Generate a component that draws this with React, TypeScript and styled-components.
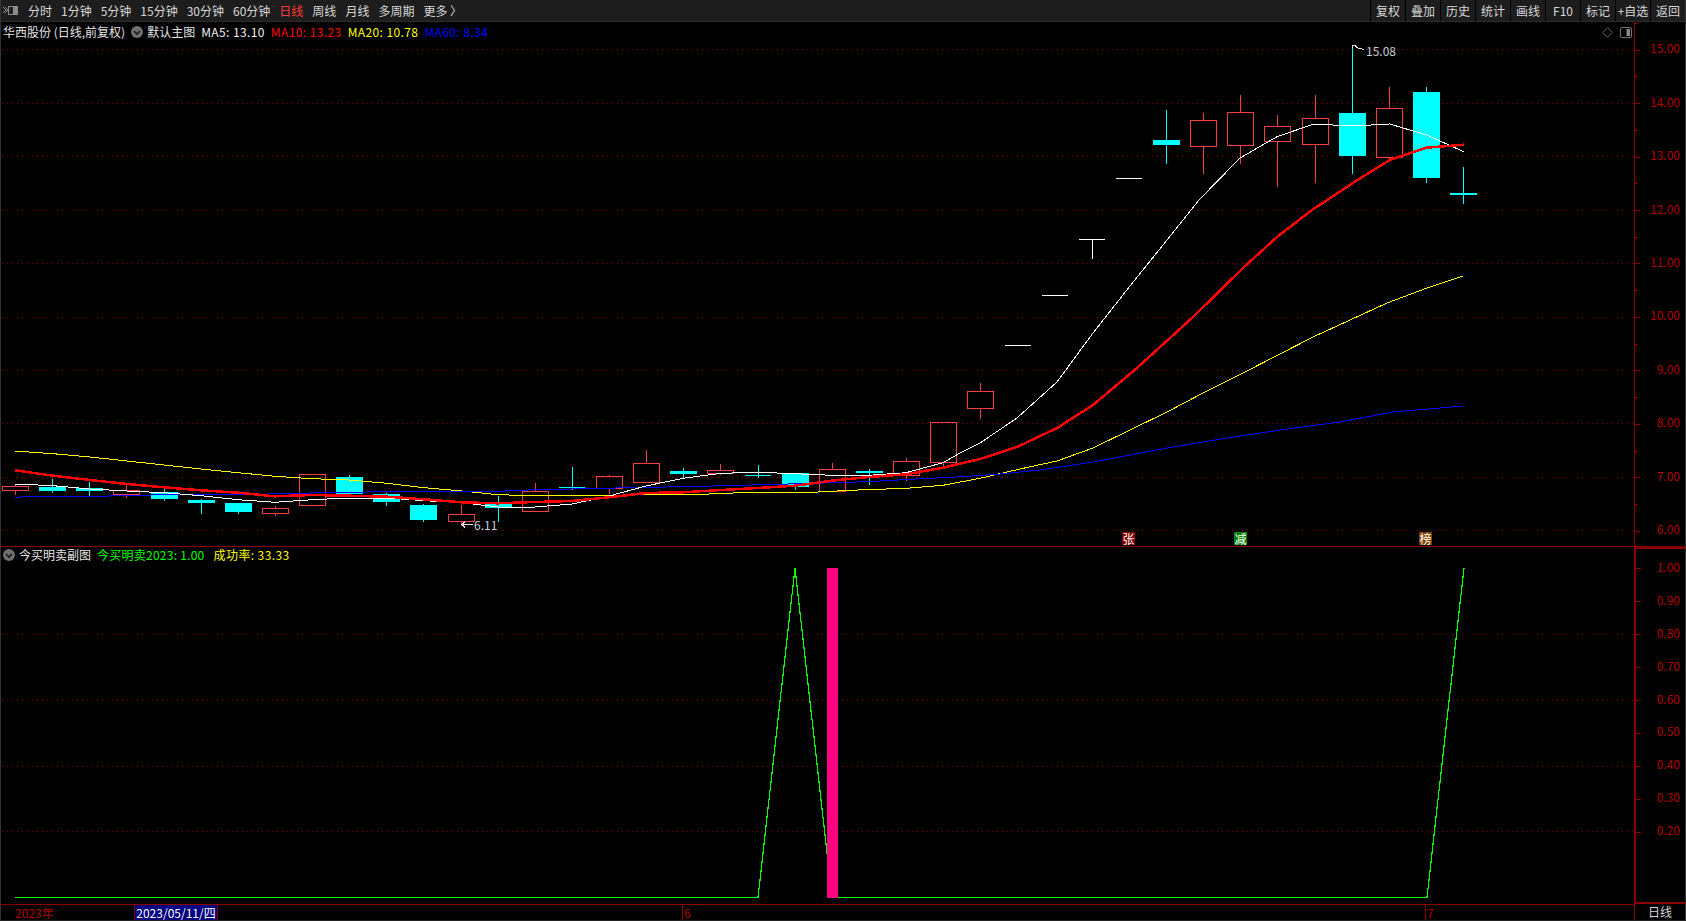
import React from 'react';
import styled, { createGlobalStyle } from 'styled-components';

const DARK_RED = '#8a0000';
const AXIS_TEXT = '#b00000';
const FONT = '"Noto Sans CJK SC", "Noto Sans", sans-serif';

const Global = createGlobalStyle`
  html, body { margin: 0; padding: 0; background: #000; }
  #root { width: 1686px; height: 921px; }
`;

const Page = styled.div`
  box-sizing: border-box;
  width: 1686px;
  height: 921px;
  display: flex;
  flex-direction: column;
  background: #000;
  border-left: 1px solid #333;
  border-right: 1px solid #333;
  border-bottom: 1px solid #222;
  overflow: hidden;
  font-family: ${FONT};
  font-size: 12px;
  line-height: 1;
`;

const Toolbar = styled.header`
  box-sizing: border-box;
  height: 22px;
  display: flex;
  align-items: stretch;
  background: #1d1d1d;
  border-bottom: 1px solid #2c2c2c;
  flex: none;
`;

const MenuIcon = styled.svg`
  width: 16px;
  height: 12px;
  margin: 5px 0 0 1px;
  flex: none;
`;

const PeriodList = styled.nav`
  display: flex;
  align-items: center;
  gap: 9px;
  margin-left: 10px;
`;

const PeriodItem = styled.span<{ $active?: boolean }>`
  color: ${(p) => (p.$active ? '#ff3a3a' : '#d8d8d8')};
  white-space: nowrap;
`;

const ActionList = styled.div`
  margin-left: auto;
  display: flex;
  align-items: stretch;
`;

const ActionButton = styled.span`
  box-sizing: border-box;
  width: 35px;
  display: flex;
  align-items: center;
  justify-content: center;
  border-left: 1px solid #000;
  color: #d8d8d8;
  white-space: nowrap;
`;

const Pane = styled.section<{ $height: number; $divider?: boolean }>`
  box-sizing: border-box;
  height: ${(p) => p.$height}px;
  display: flex;
  flex: none;
  border-bottom: ${(p) => (p.$divider ? `1px solid ${DARK_RED}` : 'none')};
`;

const ChartArea = styled.div`
  position: relative;
  flex: 1;
  min-width: 0;
  overflow: hidden;
`;

const ChartSvg = styled.svg`
  display: block;
  width: 100%;
  height: 100%;
`;

const Legend = styled.div<{ $height: number }>`
  position: absolute;
  top: 0;
  left: 2px;
  height: ${(p) => p.$height}px;
  display: flex;
  align-items: center;
  gap: 6px;
  white-space: nowrap;
`;

const LegendText = styled.span<{ $color: string; $spacing?: number }>`
  color: ${(p) => p.$color};
  letter-spacing: ${(p) => p.$spacing ?? 0}px;
`;

const LegendIcon = styled.svg`
  width: 12px;
  height: 12px;
  flex: none;
  margin-right: -2px;
`;

const CornerIcons = styled.div`
  position: absolute;
  top: 5px;
  right: 2px;
  display: flex;
  align-items: center;
  gap: 7px;
`;

const PriceNote = styled.span<{ $x: number; $y: number }>`
  position: absolute;
  left: ${(p) => p.$x}px;
  top: ${(p) => p.$y}px;
  color: #c8d0d8;
  line-height: 14px;
`;

const Badge = styled.span<{ $x: number; $bg: string }>`
  position: absolute;
  left: ${(p) => p.$x}px;
  top: 510px;
  width: 13px;
  height: 13px;
  display: flex;
  align-items: center;
  justify-content: center;
  background: ${(p) => p.$bg};
  color: #fff;
  font-size: 12px;
`;

const Axis = styled.aside<{ $thick?: boolean; $top: number; $row: number }>`
  box-sizing: border-box;
  width: 51px;
  flex: none;
  overflow: hidden;
  display: grid;
  grid-auto-rows: ${(p) => p.$row}px;
  align-content: start;
  padding-top: ${(p) => p.$top}px;
  border-left: ${(p) => (p.$thick ? 2 : 1)}px solid ${DARK_RED};
  ${(p) => (p.$thick ? `border-top: 2px solid ${DARK_RED}; border-bottom: 2px solid ${DARK_RED};` : '')}
`;

const AxisLabel = styled.div<{ $minor?: boolean }>`
  position: relative;
  display: flex;
  align-items: center;
  justify-content: flex-end;
  padding: 0 5px 3px 0;
  color: ${AXIS_TEXT};

  &::before {
    content: '';
    position: absolute;
    left: 0;
    top: 50%;
    width: 5px;
    height: 1px;
    background: ${DARK_RED};
  }

  ${(p) =>
    p.$minor
      ? `&::after {
    content: '';
    position: absolute;
    left: 0;
    top: 0;
    width: 3px;
    height: 1px;
    background: ${DARK_RED};
  }`
      : ''}
`;

const TimeAxis = styled.footer`
  box-sizing: border-box;
  flex: 1;
  display: flex;
  min-height: 0;
`;

const TimeTrack = styled.div`
  position: relative;
  flex: 1;
  border-top: 1px solid ${DARK_RED};
`;

const TimeMark = styled.span<{ $x: number }>`
  position: absolute;
  top: 0;
  bottom: 0;
  left: ${(p) => p.$x}px;
  display: flex;
  align-items: center;
  padding-left: 1px;
  color: ${AXIS_TEXT};
  border-left: 1px solid ${DARK_RED};
`;

const YearMark = styled.span`
  position: absolute;
  top: 0;
  bottom: 0;
  left: 14px;
  display: flex;
  align-items: center;
  color: ${AXIS_TEXT};
`;

const DateCursor = styled.span`
  position: absolute;
  top: 0;
  bottom: 0;
  left: 133px;
  width: 84px;
  display: flex;
  align-items: center;
  justify-content: center;
  background: #000080;
  color: #fff;
  white-space: nowrap;
  border-left: 1px solid ${DARK_RED};
  border-right: 1px solid ${DARK_RED};
  box-sizing: border-box;
`;

const PeriodCell = styled.div`
  box-sizing: border-box;
  width: 51px;
  flex: none;
  display: flex;
  align-items: center;
  justify-content: center;
  color: #d8d8d8;
  border-left: 1px solid ${DARK_RED};
`;

type C = [number, number, number, number, 'r' | 'c' | 'w'];
// [wick top, body top, body bottom, wick bottom, kind], all in page pixels
const candles: C[] = [
  [484, 486, 490, 494, 'r'],
  [479, 487, 491, 492, 'c'],
  [482, 488, 491, 495, 'c'],
  [485, 490, 494, 497, 'r'],
  [489, 492, 499, 500, 'c'],
  [499, 500, 503, 513, 'c'],
  [503, 503, 512, 513, 'c'],
  [506, 508, 513, 515, 'r'],
  [474, 474, 505, 505, 'r'],
  [475, 477, 494, 495, 'c'],
  [493, 494, 502, 505, 'c'],
  [504, 505, 520, 521, 'c'],
  [505, 514, 521, 525, 'r'],
  [496, 504, 508, 521, 'c'],
  [483, 491, 511, 511, 'r'],
  [467, 487, 488, 489, 'c'],
  [475, 476, 488, 493, 'r'],
  [450, 463, 482, 482, 'r'],
  [468, 471, 474, 477, 'c'],
  [464, 470, 473, 474, 'r'],
  [465, 475, 476, 477, 'c'],
  [473, 473, 487, 489, 'c'],
  [463, 469, 491, 491, 'r'],
  [469, 471, 473, 484, 'c'],
  [458, 461, 475, 480, 'r'],
  [422, 422, 462, 467, 'r'],
  [383, 391, 408, 418, 'r'],
  [345, 345, 345, 345, 'w'],
  [295, 295, 295, 295, 'w'],
  [239, 239, 239, 258, 'w'],
  [178, 178, 178, 178, 'w'],
  [110, 140, 145, 163, 'c'],
  [113, 120, 146, 173, 'r'],
  [95, 112, 145, 163, 'r'],
  [115, 126, 141, 186, 'r'],
  [95, 118, 144, 182, 'r'],
  [45, 113, 156, 173, 'c'],
  [87, 108, 157, 160, 'r'],
  [87, 92, 178, 182, 'c'],
  [167, 193, 195, 203, 'c'],
];

type Pt = [number, number];
const ma5: Pt[] = [
  [15, 484], [53, 485.7], [90, 489], [127, 491], [164, 492.7], [201, 495.7], [238, 499.7], [275, 502.3],
  [312, 499.7], [349, 498], [387, 498], [424, 500.7], [462, 502.7], [498, 507], [535, 507], [572, 504],
  [609, 496], [646, 486], [683, 478.3], [721, 473.3], [758, 472.3], [795, 473.7], [832, 475.3], [869, 475.3],
  [906, 472.7], [943, 462.7], [960, 453], [980, 443], [1017, 418], [1057, 382], [1093, 333], [1130, 286],
  [1167, 240], [1199, 200], [1221.7, 176.7], [1240, 158], [1277, 136.7], [1314, 124], [1352.7, 126],
  [1389.7, 124], [1426.7, 135], [1463.7, 151.7],
];
const ma10: Pt[] = [
  [15, 470.3], [53, 475.7], [90, 480], [127, 484], [164, 487.3], [201, 490.3], [238, 492.7], [275, 496.3],
  [312, 495], [349, 495.7], [387, 496.7], [424, 499.3], [462, 502.3], [498, 503.3], [535, 502], [572, 501],
  [609, 497.3], [646, 493], [683, 492.3], [721, 490], [758, 488], [795, 485.7], [832, 480.7], [869, 477],
  [906, 474.3], [943, 467.7], [980, 459], [1017, 447], [1057, 428], [1093, 405], [1137, 368], [1193, 317],
  [1243, 268], [1277, 237], [1312, 210], [1352.7, 183], [1389.7, 160], [1426.7, 147.7], [1463.7, 144.7],
];
const ma20: Pt[] = [
  [15, 451], [53, 453.7], [90, 457], [127, 461], [164, 465], [201, 469], [238, 472.7], [275, 476.3],
  [312, 478.7], [349, 480], [387, 483.3], [424, 487.7], [462, 491], [498, 494.7], [535, 495.7], [572, 495.7],
  [609, 496], [646, 494.3], [702, 494.3], [740, 492.7], [813, 492.3], [850, 490.3], [906, 488.3], [943, 485.3],
  [980, 478.3], [1020, 469], [1057, 461], [1093, 448], [1130, 430], [1167, 412], [1203, 393], [1243, 373],
  [1280, 354], [1313, 337], [1387, 303], [1427, 288], [1463, 276],
];
const ma60: Pt[] = [
  [15, 497.3], [34, 496.3], [109, 496], [164, 494.7], [257, 494.3], [293, 493.3], [367, 492], [433, 491.7],
  [500, 491.3], [517, 490.3], [553, 489.3], [590, 488.7], [628, 487.7], [702, 486.3], [740, 485.3], [777, 484.3],
  [813, 483.3], [850, 482.3], [887, 480.7], [915, 479], [963, 476.7], [1000, 474], [1040, 470], [1093, 462],
  [1167, 448], [1227, 438], [1287, 429], [1340, 422], [1393, 412], [1463, 406],
];
const signal: Pt[] = [[15, 897.5], [758, 897.5], [795, 568], [832, 897.5], [1427, 897.5], [1464, 568]];

const pts = (p: Pt[]) => p.map(([x, y]) => `${x},${y}`).join(' ');
const candleX = (i: number) => Math.round(15 + 37.13 * i);
const priceY = (p: number) => Math.round(49.3 + (15 - p) * 53.45) + 0.5;

const COLORS = { r: '#f44040', c: '#00ffff', w: '#ffffff' };

function Candle({ i, c }: { i: number; c: C }) {
  const x = candleX(i);
  const [hi, top, bot, lo, kind] = c;
  const col = COLORS[kind];
  const wick = <line x1={x + 0.5} x2={x + 0.5} y1={hi} y2={lo + 1} stroke={col} />;
  if (kind === 'c' && bot - top >= 2) {
    return (
      <g>
        {wick}
        <rect x={x - 13} y={top} width={27} height={bot - top} fill={col} />
      </g>
    );
  }
  if (bot - top < 2) {
    return (
      <g>
        {wick}
        <line x1={x - 13} x2={x + 13} y1={top + 0.5} y2={top + 0.5} stroke={col} />
      </g>
    );
  }
  return (
    <g>
      <line x1={x + 0.5} x2={x + 0.5} y1={hi} y2={top} stroke={col} />
      <line x1={x + 0.5} x2={x + 0.5} y1={bot} y2={lo + 1} stroke={col} />
      <rect x={x - 12.5} y={top + 0.5} width={26} height={bot - top} fill="none" stroke={col} />
    </g>
  );
}

const DropIcon = () => (
  <LegendIcon viewBox="0 0 12 12">
    <circle cx="6" cy="6" r="6" fill="#6f6f6f" />
    <path d="M3 5l3 3 3-3" fill="none" stroke="#1a1a1a" strokeWidth="1.6" />
  </LegendIcon>
);

const periods = ['分时', '1分钟', '5分钟', '15分钟', '30分钟', '60分钟', '日线', '周线', '月线', '多周期', '更多 〉'];
const actions = ['复权', '叠加', '历史', '统计', '画线', 'F10', '标记', '+自选', '返回'];
const prices = [15, 14, 13, 12, 11, 10, 9, 8, 7, 6];
const ratios = [1, 0.9, 0.8, 0.7, 0.6, 0.5, 0.4, 0.3, 0.2];

export default function App() {
  return (
    <>
      <Global />
      <Page>
        <Toolbar>
          <MenuIcon viewBox="0 0 16 12">
            <path d="M1 2l3 3-3 3M3 2l3 3-3 3" fill="none" stroke="#8a8a8a" strokeWidth="1" />
            <rect x="6.5" y="1.5" width="9" height="8" fill="#222" stroke="#8a8a8a" />
            <rect x="11" y="2" width="4" height="7" fill="#8a8a8a" />
          </MenuIcon>
          <PeriodList>
            {periods.map((p) => (
              <PeriodItem key={p} $active={p === '日线'}>
                {p}
              </PeriodItem>
            ))}
          </PeriodList>
          <ActionList>
            {actions.map((a) => (
              <ActionButton key={a}>{a}</ActionButton>
            ))}
          </ActionList>
        </Toolbar>

        <Pane $height={525} $divider>
          <ChartArea>
            <ChartSvg viewBox="1 22 1633 524" preserveAspectRatio="none" shapeRendering="crispEdges">
              {prices.map((p) => (
                <line key={p} x1={2} x2={1634} y1={priceY(p)} y2={priceY(p)} stroke="#8a0000" strokeDasharray="1 4" />
              ))}
              {candles.map((c, i) => (
                <Candle key={i} i={i} c={c} />
              ))}
              <polyline points={pts(ma20)} fill="none" stroke="#ffff00" strokeWidth={1} />
              <polyline points={pts(ma60)} fill="none" stroke="#0000ff" strokeWidth={1} />
              <polyline points={pts(ma5)} fill="none" stroke="#ffffff" strokeWidth={1} />
              <polyline points={pts(ma10)} fill="none" stroke="#ff0000" strokeWidth={2.5} />
              <path d="M1352.5 48V45.5h3M1354 45.5l4 2.5 6 1.5" fill="none" stroke="#e0e0e0" />
              <path d="M473 524.5h-11M465 521.5l-3 3 3 3" fill="none" stroke="#e0e0e0" />
            </ChartSvg>
            <Legend $height={19}>
              <LegendText $color="#e4e4e4">华西股份 (日线,前复权)</LegendText>
              <DropIcon />
              <LegendText $color="#e4e4e4">默认主图</LegendText>
              <LegendText $color="#f0f0f0" $spacing={0.4}>MA5: 13.10</LegendText>
              <LegendText $color="#ff0000" $spacing={0.4}>MA10: 13.23</LegendText>
              <LegendText $color="#ffff00" $spacing={0.4}>MA20: 10.78</LegendText>
              <LegendText $color="#0000ff" $spacing={0.4}>MA60: 8.34</LegendText>
            </Legend>
            <CornerIcons>
              <svg width="11" height="11" viewBox="0 0 11 11">
                <path d="M5.5 .7l4.8 4.8-4.8 4.8L.7 5.5z" fill="none" stroke="#666" />
              </svg>
              <svg width="12" height="11" viewBox="0 0 12 11">
                <rect x=".5" y=".5" width="11" height="10" rx="1.5" fill="none" stroke="#777" />
                <rect x="6.5" y="2" width="3.5" height="7" fill="#8a8a8a" />
              </svg>
            </CornerIcons>
            <PriceNote $x={1365} $y={22}>
              15.08
            </PriceNote>
            <PriceNote $x={473} $y={496}>
              6.11
            </PriceNote>
            <Badge $x={1121} $bg="#800000">
              张
            </Badge>
            <Badge $x={1233} $bg="#008000">
              减
            </Badge>
            <Badge $x={1418} $bg="#804000">
              榜
            </Badge>
          </ChartArea>
          <Axis $top={1} $row={53.45}>
            {prices.map((p) => (
              <AxisLabel key={p} $minor>
                {p.toFixed(2)}
              </AxisLabel>
            ))}
          </Axis>
        </Pane>

        <Pane $height={357}>
          <ChartArea>
            <ChartSvg viewBox="1 547 1633 357" preserveAspectRatio="none" shapeRendering="crispEdges">
              {[634, 700, 766, 831].map((y) => (
                <line key={y} x1={2} x2={1634} y1={y + 0.5} y2={y + 0.5} stroke="#8a0000" strokeDasharray="1 4" />
              ))}
              <polyline points={pts(signal)} fill="none" stroke="#00ff00" strokeWidth={1.2} />
              <rect x={827} y={568} width={11} height={330} fill="#ff0080" />
            </ChartSvg>
            <Legend $height={16}>
              <DropIcon />
              <LegendText $color="#e4e4e4">今买明卖副图</LegendText>
              <LegendText $color="#00ff00" $spacing={0.25}>今买明卖2023: 1.00</LegendText>
              <LegendText $color="#ffff00" $spacing={0.4}>&nbsp;成功率: 33.33</LegendText>
            </Legend>
          </ChartArea>
          <Axis $thick $top={3} $row={32.9}>
            {ratios.map((r) => (
              <AxisLabel key={r}>{r.toFixed(2)}</AxisLabel>
            ))}
          </Axis>
        </Pane>

        <TimeAxis>
          <TimeTrack>
            <YearMark>2023年</YearMark>
            <DateCursor>2023/05/11/四</DateCursor>
            <TimeMark $x={681}>6</TimeMark>
            <TimeMark $x={1424}>7</TimeMark>
          </TimeTrack>
          <PeriodCell>日线</PeriodCell>
        </TimeAxis>
      </Page>
    </>
  );
}
